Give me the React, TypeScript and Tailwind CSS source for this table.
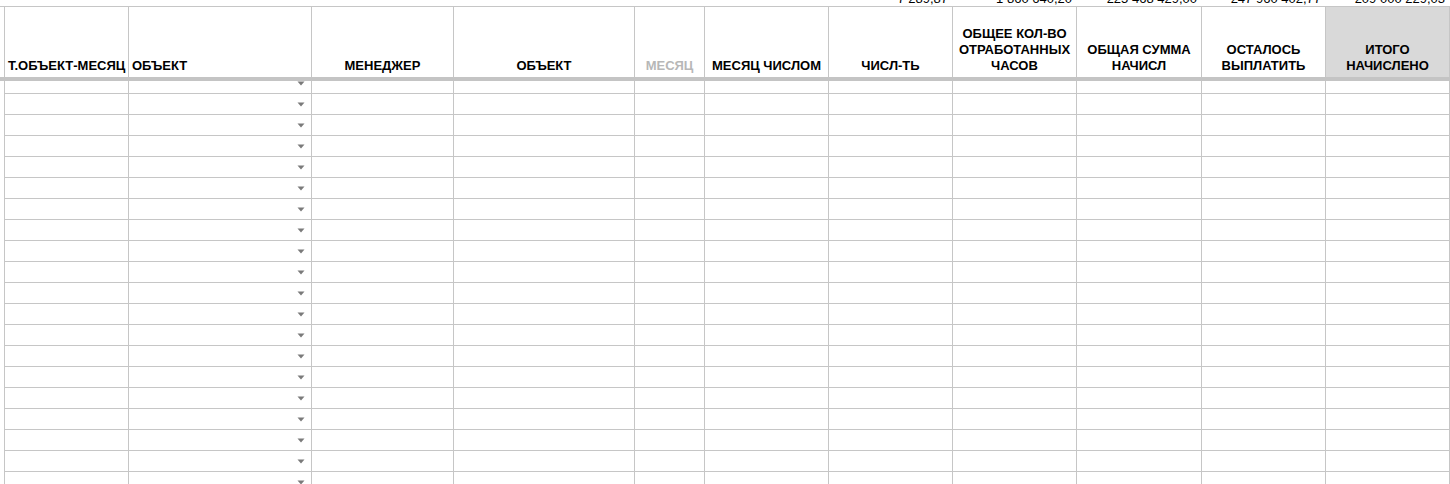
const cols = [
  { w: 'w-[124px]', label: ['Т.ОБЪЕКТ-МЕСЯЦ'], align: 'left' },
  { w: 'w-[183px]', label: ['ОБЪЕКТ'], align: 'left', dropdown: true },
  { w: 'w-[142px]', label: ['МЕНЕДЖЕР'] },
  { w: 'w-[181px]', label: ['ОБЪЕКТ'] },
  { w: 'w-[70px]', label: ['МЕСЯЦ'], muted: true },
  { w: 'w-[124px]', label: ['МЕСЯЦ ЧИСЛОМ'] },
  { w: 'w-[124px]', label: ['ЧИСЛ-ТЬ'], total: '7 289,87' },
  { w: 'w-[124px]', label: ['ОБЩЕЕ КОЛ-ВО', 'ОТРАБОТАННЫХ', 'ЧАСОВ'], total: '1 860 640,20' },
  { w: 'w-[125px]', label: ['ОБЩАЯ СУММА', 'НАЧИСЛ'], total: '225 468 429,00' },
  { w: 'w-[124px]', label: ['ОСТАЛОСЬ', 'ВЫПЛАТИТЬ'], total: '247 960 402,77' },
  { w: 'w-[124px]', label: ['ИТОГО', 'НАЧИСЛЕНО'], total: '209 000 229,03', shaded: true },
];

const rowCount = 20;

function Arrow() {
  return (
    <svg width="8" height="5" viewBox="0 0 8 5" className="shrink-0">
      <path d="M0.5 0.5 L7.5 0.5 L4 4.5 Z" fill="#7a7a7a" />
    </svg>
  );
}

export default function App() {
  return (
    <div className="w-[1450px] h-[484px] overflow-hidden bg-white font-['Liberation_Sans',Arial,sans-serif] text-[13px] text-black">
      {/* totals row, mostly scrolled out of view */}
      <div className="flex h-[6px] overflow-hidden pl-[5px]">
        {cols.map((c, i) => (
          <div key={i} className={`${c.w} shrink-0 flex items-end justify-end pr-[5px]`}>
            {c.total && <span className="leading-[14px] whitespace-nowrap">{c.total}</span>}
          </div>
        ))}
      </div>
      <div className="border-t border-[#c6c6c6]">
        {/* header */}
        <div className="flex h-[70px] pl-[4px]">
          <div className="w-px shrink-0 bg-[#c6c6c6]" />
          {cols.map((c, i) => (
            <div
              key={i}
              className={`${c.w} shrink-0 border-r border-[#c6c6c6] flex flex-col justify-end pb-[3px] font-bold leading-[16px] whitespace-nowrap overflow-hidden ${
                c.align === 'left' ? 'items-start pl-[3px]' : 'items-center'
              } ${c.shaded ? 'bg-[#d9d9d9]' : ''} ${c.muted ? 'text-[#b7b7b7]' : ''}`}
            >
              {c.label.map((l, j) => (
                <span key={j}>{l}</span>
              ))}
            </div>
          ))}
        </div>
        <div className="h-[4px] bg-[#c4c4c4]" />
        {/* data rows */}
        {Array.from({ length: rowCount }).map((_, r) => (
          <div key={r} className={`flex pl-[4px] ${r === 0 ? 'h-[13px]' : 'h-[21px]'}`}>
            <div className="w-px shrink-0 bg-[#c6c6c6]" />
            {cols.map((c, i) => (
              <div
                key={i}
                className={`${c.w} shrink-0 border-r border-b border-[#c6c6c6] flex justify-end pr-[6px] ${
                  r === 0 ? 'items-start' : 'items-center'
                }`}
              >
                {c.dropdown && <Arrow />}
              </div>
            ))}
          </div>
        ))}
      </div>
    </div>
  );
}
